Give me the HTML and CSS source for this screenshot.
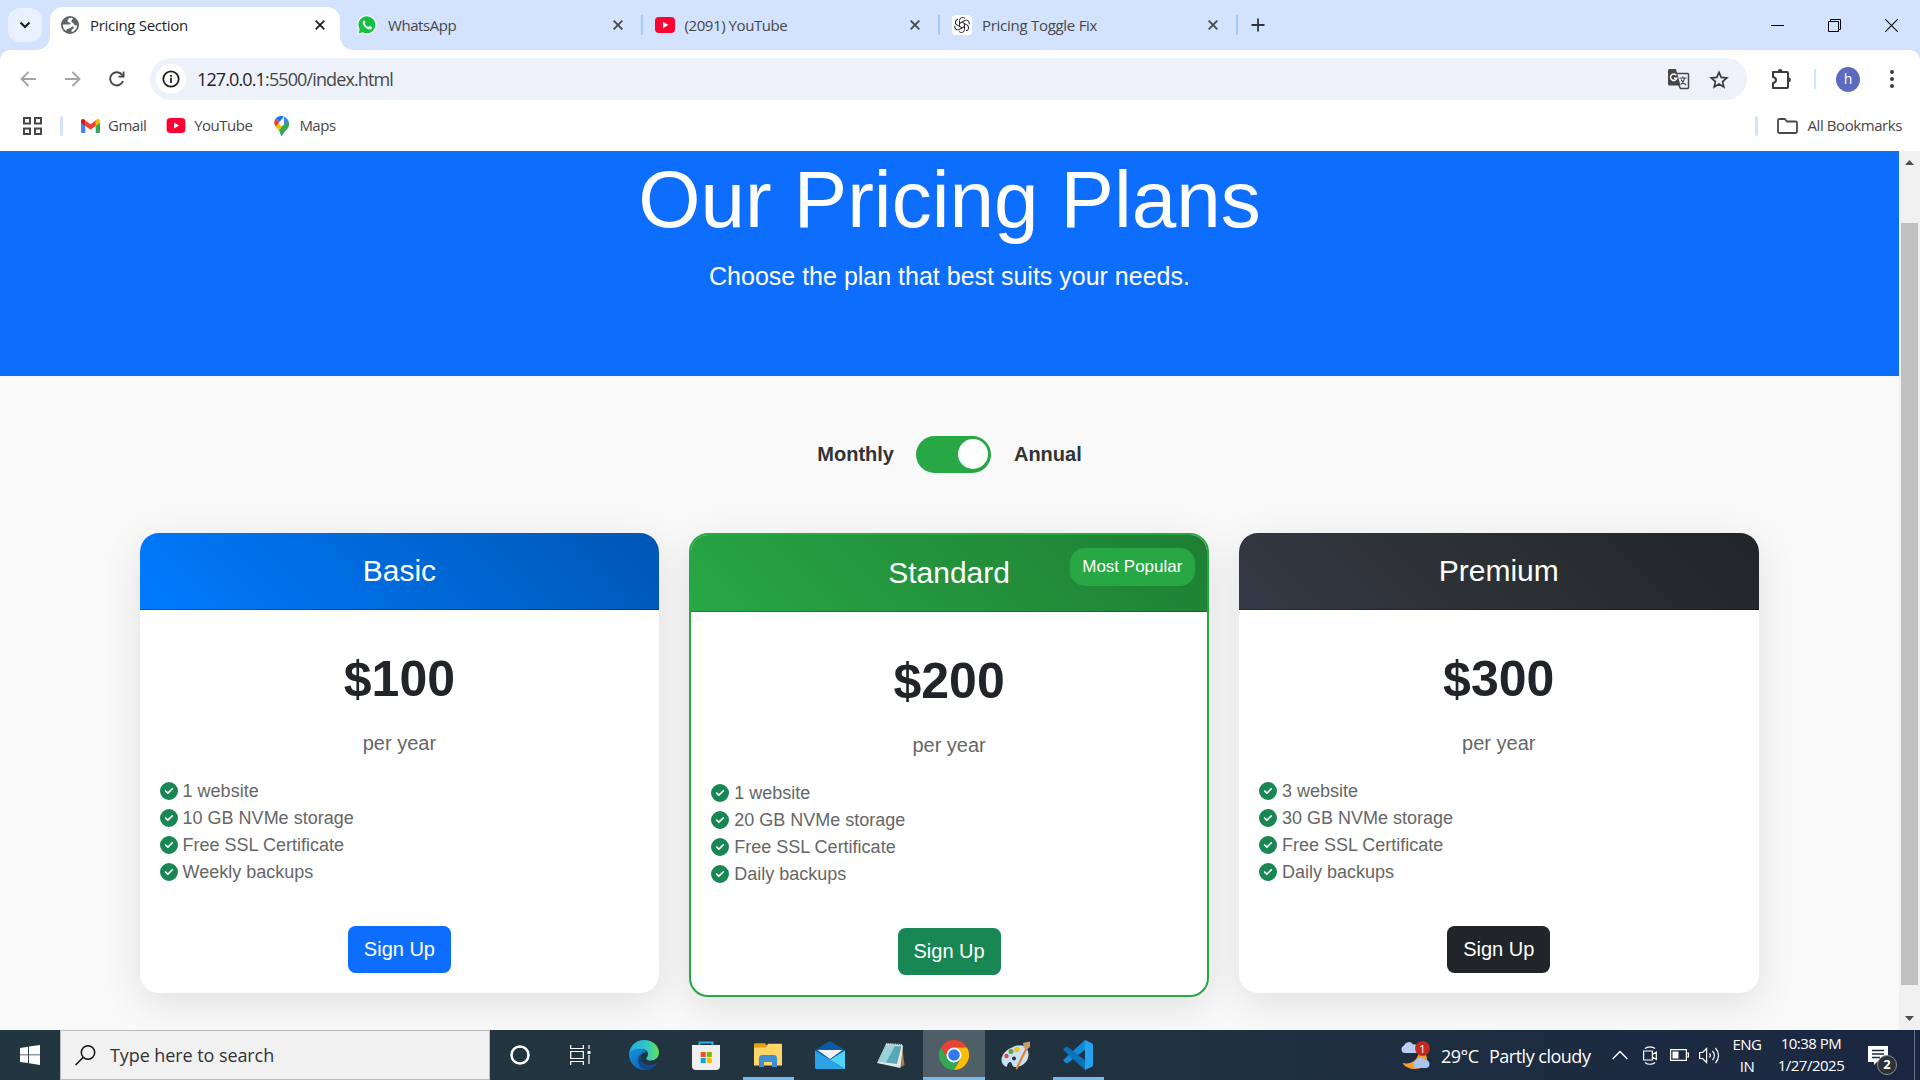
FILE: index.html
```html
<!DOCTYPE html>
<html lang="en">
<head>
<meta charset="utf-8">
<title>Pricing Section</title>
<link rel="stylesheet" href="styles.css">
</head>
<body>
<svg class="defs" aria-hidden="true">
  <symbol id="check" viewBox="0 0 512 512"><path fill="#198754" d="M256 512A256 256 0 1 0 256 0a256 256 0 1 0 0 512zM369 209L241 337c-9.400 9.400-24.600 9.400-33.900 0l-64-64c-9.400-9.400-9.400-24.600 0-33.900s24.600-9.400 33.900 0l47 47L335 175c9.400-9.400 24.600-9.400 33.900 0s9.400 24.600 0 33.900z"/></symbol>
  <symbol id="close" viewBox="0 0 10 10"><path d="M.7.7l8.600 8.600M9.300.7L.7 9.300" fill="none" stroke="currentColor" stroke-width="1.800"/></symbol>
  <symbol id="yt" viewBox="0 0 20 16"><rect width="20" height="16" rx="4" fill="#ff0033"/><path d="M8 4.700v6.600L13.300 8z" fill="#fff"/></symbol>
</svg>

<header class="tabstrip">
  <div class="tab-search"><svg width="12" height="8" viewBox="0 0 12 8"><path d="M1.500 1.500L6 6l4.500-4.500" fill="none" stroke="#1f1f1f" stroke-width="2.200"/></svg></div>
  <div class="tab tab-active">
    <svg class="fav" viewBox="0 0 20 20"><circle cx="10" cy="10" r="9" fill="#5f6368"/><path d="M11.500 2.800C9.500 2.800 7.500 4 7.500 6c0 1.600 1.500 1.300 2.600 1.800 1 .5.300 1.700-.7 1.700H2.900c-.2 3 1.100 5.300 3.300 6.600 0-1.500.6-2.400 1.900-2.400 1.500 0 2.400-.6 3.400-1.600 1-.9 2.300-.5 2.300.6 0 1.300-1.800 1.200-2.200 2.200-.3.800.2 1.600.1 2.200 3-.9 5.300-3.600 5.400-6.900-1.500.5-3-.1-3.300-1.500-.2-1.200-2.200-.7-2.500-2.200-.3-1.300 1.500-1.700 1.500-2.800 0-.4-.4-.8-1.300-.9z" fill="#fff"/></svg>
    <span class="tab-title t-pricing">Pricing Section</span>
    <svg class="tab-x"><use href="#close"/></svg>
  </div>
  <div class="tab">
    <svg class="fav" viewBox="0 0 20 20"><path d="M0 20l1.300-5.200A9.800 9.800 0 1 1 5.200 18.700z" fill="#fff"/><path d="M1.600 18.400l1.100-4A8.500 8.500 0 1 1 5.800 17.300z" fill="#12c143"/><path d="M6.900 5.200c-.8.400-1.400 1.300-1.200 2.500.5 3.200 3.800 6.300 6.900 6.700 1.200.1 2.300-.7 2.400-1.900.1-.4-2.300-1.500-2.600-1.500-.5.100-.7 1.100-1.200 1-1.500-.5-2.900-1.800-3.500-3.300-.1-.5.800-.9.700-1.300-.2-.7-.7-2.300-1.500-2.200z" fill="#fff"/></svg>
    <span class="tab-title t-whatsapp">WhatsApp</span>
    <svg class="tab-x"><use href="#close"/></svg>
  </div>
  <div class="tab tab-ruled">
    <svg class="fav yt-fav"><use href="#yt"/></svg>
    <span class="tab-title t-youtube">(2091) YouTube</span>
    <svg class="tab-x"><use href="#close"/></svg>
  </div>
  <div class="tab tab-ruled">
    <svg class="fav" viewBox="0 0 20 20"><defs><path id="strand" d="M7.500 11.400V5.500A3.100 3.100 0 0 1 13 3.600"/></defs><rect width="20" height="20" rx="4" fill="#fff"/><g fill="none" stroke="#222" stroke-width=".95"><use href="#strand"/><use href="#strand" transform="rotate(60 10 10)"/><use href="#strand" transform="rotate(120 10 10)"/><use href="#strand" transform="rotate(180 10 10)"/><use href="#strand" transform="rotate(240 10 10)"/><use href="#strand" transform="rotate(300 10 10)"/></g></svg>
    <span class="tab-title t-toggle">Pricing Toggle Fix</span>
    <svg class="tab-x"><use href="#close"/></svg>
  </div>
  <div class="new-tab tab-ruled"><svg width="14" height="14" viewBox="0 0 14 14"><path d="M7 .5v13M.5 7h13" stroke="#333" stroke-width="1.800"/></svg></div>
  <div class="win-controls">
    <svg width="13" height="13" viewBox="0 0 13 13"><path d="M0 6.500h13" stroke="#000"/></svg>
    <svg width="13" height="13" viewBox="0 0 13 13"><path d="M.5 2.500h10v10H.5zM2.500 2.500v-2h10v10h-2" fill="none" stroke="#000"/></svg>
    <svg width="13" height="13" viewBox="0 0 13 13"><path d="M.3.300l12.400 12.400M12.700.300L.3 12.700" stroke="#111" stroke-width="1.200"/></svg>
  </div>
</header>

<nav class="browser">
  <div class="toolbar">
    <div class="nav-buttons">
      <svg width="16" height="16" viewBox="0 0 16 16"><path d="M8.500 1L1.500 8l7 7M1.500 8H16" fill="none" stroke="#a3a3a3" stroke-width="1.800"/></svg>
      <svg width="16" height="16" viewBox="0 0 16 16"><path d="M7.500 1l7 7-7 7M14.500 8H0" fill="none" stroke="#a3a3a3" stroke-width="1.800"/></svg>
      <svg width="16" height="16" viewBox="0 0 16 16"><path d="M14 10a6.600 6.600 0 1 1-.9-6.100l1.500 1.600" fill="none" stroke="#474747" stroke-width="1.900"/><path d="M15.500.500v6H9.500V4.700h4.200V.5z" fill="#474747"/></svg>
    </div>
    <div class="omnibox">
      <span class="site-info"><svg width="18" height="18" viewBox="0 0 18 18"><circle cx="9" cy="9" r="7.700" fill="none" stroke="#1f1f1f" stroke-width="1.800"/><path d="M9 7.800v5.200M9 5v1.800" stroke="#1f1f1f" stroke-width="1.800"/></svg></span>
      <span class="url">127.0.0.1<span class="url-path">:5500/index.html</span></span>
      <svg class="translate" width="22" height="21" viewBox="0 0 22 21"><path d="M9 4.500h10.500a1 1 0 0 1 1 1v13a1 1 0 0 1-1 1H12.500l-2-4" fill="#edf1fa" stroke="#474747" stroke-width="1.500"/><path d="M1.500 0H8l4.500 16.500h-11A1.500 1.500 0 0 1 0 15V1.500A1.500 1.500 0 0 1 1.500 0z" fill="#474747"/><path d="M8.300 6.300a3.200 3.200 0 1 0 .5 2.900H5.900" fill="none" stroke="#fff" stroke-width="1.500"/><path d="M11.500 9h7M14.700 7.500V9m2 0c-.5 2.800-2 5-4 6.500m.5-5c1 2.400 2.500 4.300 5 5.500" fill="none" stroke="#474747" stroke-width="1.200"/></svg>
      <svg class="star" width="20" height="19" viewBox="0 0 20 19"><path d="M10 2.300l2.200 5.100 5.600.5-4.200 3.700 1.200 5.400L10 14.100 5.200 17l1.200-5.400-4.200-3.700 5.600-.5z" fill="none" stroke="#3c3c3c" stroke-width="1.700"/></svg>
    </div>
    <svg class="puzzle" width="22" height="21" viewBox="0 0 22 21"><path d="M2 3h14a1 1 0 0 1 1 1v14a1 1 0 0 1-1 1H2v-5c4-.5 4-5.500 0-6z" fill="none" stroke="#3c3c3c" stroke-width="2" stroke-linejoin="round"/><path d="M6.700 2.500a2.400 2.400 0 0 1 4.800 0zM17.500 8.600a2.400 2.400 0 0 1 0 4.800z" fill="#3c3c3c"/></svg>
    <i class="toolbar-rule"></i>
    <span class="avatar">h</span>
    <svg class="dots" width="4" height="18" viewBox="0 0 4 18"><g fill="#3c3c3c"><circle cx="2" cy="2" r="2"/><circle cx="2" cy="9" r="2"/><circle cx="2" cy="16" r="2"/></g></svg>
  </div>
  <div class="bookmarks">
    <svg class="apps" width="19" height="18" viewBox="0 0 19 18"><path d="M1 1h6v5.500H1zM12 1h6v5.500h-6zM1 11.500h6V17H1zM12 11.500h6V17h-6z" fill="none" stroke="#474747" stroke-width="2"/></svg>
    <i class="bm-rule"></i>
    <span class="bm bm-gmail"><svg width="19" height="14" viewBox="0 0 19 14"><path d="M0 2v10.700C0 13.500.6 14 1.300 14h3V5z" fill="#4285f4"/><path d="M19 2v10.700c0 .8-.6 1.300-1.300 1.300h-3V5z" fill="#34a853"/><path d="M14.700 1.300V6.900L19 3.700V2c0-2-2-2.600-3.200-1.600z" fill="#fbbc04"/><path d="M4.300 6.900V1.300l5.200 3.900 5.200-3.900v5.600l-5.200 3.900z" fill="#ea4335"/><path d="M0 2v1.700l4.300 3.200V1.300L3.200.4C2-.6 0 0 0 2z" fill="#c5221f"/></svg><span class="bm-text">Gmail</span></span>
    <span class="bm bm-youtube"><svg width="20" height="15"><use href="#yt"/></svg><span class="bm-text">YouTube</span></span>
    <span class="bm bm-maps"><svg width="15" height="20" viewBox="0 0 15 20"><path d="M7.500 20C6.600 20 6.800 17 4.800 14.500L12 5l2.500 0c1.200 3.500.3 6-1.300 8-2.200 2.800-3.800 4-4.700 6.200-.2.500-.5.800-1 .8z" fill="#34a853"/><path d="M4.800 14.500C3.900 13.200 2.500 12 1.600 10.700l4-4.600 4.300 2.500z" fill="#fbbc04"/><path d="M1.600 10.700C-.3 7.700-.2 4.900 1.700 2.600l4 3.500z" fill="#ea4335"/><path d="M1.700 2.600C3.900 0 6.700-.5 9.700.4L5.700 6.100z" fill="#1a73e8"/><path d="M9.700.4c2.300.8 3.900 2.200 4.800 4.600l-4.600 3.600z" fill="#4285f4"/><circle cx="7.500" cy="7.300" r="2.500" fill="#fff"/></svg><span class="bm-text">Maps</span></span>
    <i class="bm-rule bm-rule-right"></i>
    <span class="bm bm-all"><svg width="21" height="16" viewBox="0 0 21 16"><path d="M2.500 1h5.300l2.200 2.500h8.500A1.500 1.500 0 0 1 20 5v8.500a1.500 1.500 0 0 1-1.500 1.500h-16A1.500 1.500 0 0 1 1 13.500v-11A1.500 1.500 0 0 1 2.500 1z" fill="none" stroke="#474747" stroke-width="1.800"/></svg><span class="bm-text">All Bookmarks</span></span>
  </div>
</nav>

<div class="viewport">
  <main class="page">
    <section class="hero">
      <h1>Our Pricing Plans</h1>
      <p>Choose the plan that best suits your needs.</p>
    </section>
    <div class="billing">
      <span>Monthly</span><span class="switch"><i></i></span><span>Annual</span>
    </div>
    <div class="plans">
      <article class="card basic">
        <h2>Basic</h2>
        <div class="card-body">
          <div class="price">$100</div>
          <p class="period">per year</p>
          <ul>
            <li><svg><use href="#check"/></svg>1 website</li>
            <li><svg><use href="#check"/></svg>10 GB NVMe storage</li>
            <li><svg><use href="#check"/></svg>Free SSL Certificate</li>
            <li><svg><use href="#check"/></svg>Weekly backups</li>
          </ul>
          <a class="btn">Sign Up</a>
        </div>
      </article>
      <article class="card standard">
        <span class="badge">Most Popular</span>
        <h2>Standard</h2>
        <div class="card-body">
          <div class="price">$200</div>
          <p class="period">per year</p>
          <ul>
            <li><svg><use href="#check"/></svg>1 website</li>
            <li><svg><use href="#check"/></svg>20 GB NVMe storage</li>
            <li><svg><use href="#check"/></svg>Free SSL Certificate</li>
            <li><svg><use href="#check"/></svg>Daily backups</li>
          </ul>
          <a class="btn">Sign Up</a>
        </div>
      </article>
      <article class="card premium">
        <h2>Premium</h2>
        <div class="card-body">
          <div class="price">$300</div>
          <p class="period">per year</p>
          <ul>
            <li><svg><use href="#check"/></svg>3 website</li>
            <li><svg><use href="#check"/></svg>30 GB NVMe storage</li>
            <li><svg><use href="#check"/></svg>Free SSL Certificate</li>
            <li><svg><use href="#check"/></svg>Daily backups</li>
          </ul>
          <a class="btn">Sign Up</a>
        </div>
      </article>
    </div>
  </main>
  <aside class="scrollbar">
    <svg width="9" height="5" viewBox="0 0 9 5"><path d="M0 5L4.500 0 9 5z" fill="#505050"/></svg>
    <i class="thumb"></i>
    <svg width="9" height="5" viewBox="0 0 9 5"><path d="M0 0l4.500 5L9 0z" fill="#505050"/></svg>
  </aside>
</div>

<footer class="taskbar">
  <div class="start"><svg width="20" height="20" viewBox="0 0 20 20"><path d="M0 2.900L8.100 1.700v7.700H0zM9 1.600L20 0v9.400H9zM0 10.300h8.100V18L0 16.900zM9 10.300h11V20L9 18.200z" fill="#fff"/></svg></div>
  <div class="search"><svg width="21" height="21" viewBox="0 0 21 21"><circle cx="13" cy="7.500" r="6.700" fill="none" stroke="#111" stroke-width="1.500"/><path d="M8.300 12.300L.6 20" stroke="#111" stroke-width="1.600"/></svg><span>Type here to search</span></div>
  <div class="apps-row">
    <div class="slot"><svg width="20" height="20" viewBox="0 0 20 20"><circle cx="10" cy="10" r="8.500" fill="none" stroke="#fff" stroke-width="2.500"/></svg></div>
    <div class="slot"><svg class="taskview" width="21" height="20" viewBox="0 0 21 20"><path d="M.7 0v3.500h12.600V0M.7 20v-3.500h12.600V20M.7 6.500h12.600v7H.7zM19 0v4M19 10v9" fill="none" stroke="#fff" stroke-width="1.200"/><path d="M17.500 6h3v3h-3z" fill="#fff"/></svg></div>
    <div class="slot"><svg width="30" height="30" viewBox="0 0 30 30"><defs><linearGradient id="edgeTop" x1="0" x2="1"><stop offset="0" stop-color="#27a6e8"/><stop offset=".6" stop-color="#32c8c4"/><stop offset="1" stop-color="#66e04f"/></linearGradient><linearGradient id="edgeLow" x1="0" x2=".8" y1="0" y2="1"><stop offset="0" stop-color="#1795df"/><stop offset="1" stop-color="#0b61b3"/></linearGradient></defs><path d="M0 14C1 5.500 7 0 15 0c9 0 15 6 15 12.500 0 5-4 8-8.500 8-3.500 0-5-1.600-4-2.800 3.500-4 .5-8.700-5-8.700C6 9 1 12 0 14z" fill="url(#edgeTop)"/><path d="M0 14c2-4 6.500-5.500 11-5.200 3.500.3 5.500 2 6.500 3.500-5 0-7 3.700-6 8.200 1 4.800 5 8.500 9 8.500C10.500 33 0 25 0 14z" fill="url(#edgeLow)"/><path d="M12.500 13.500c-3.500 5 1 11.500 8.500 11.500 2.500 0 4.500-.8 6-1.700.7-.4 1.300.2.900.8C25.500 28 21.500 30 17.500 30 9 29 6 18 12.500 13.500z" fill="#114a8b"/></svg></div>
    <div class="slot"><svg class="store" width="30" height="30" viewBox="0 0 30 30"><path d="M8.500 6V2.500h13V6" fill="none" stroke="#2bb4ee" stroke-width="2"/><path d="M1 5h28v21a4 4 0 0 1-4 4H5a4 4 0 0 1-4-4z" fill="#efefef"/><path d="M9.700 12h5v5h-5z" fill="#f25022"/><path d="M15.800 12h5v5h-5z" fill="#7fba00"/><path d="M9.700 18h5v5h-5z" fill="#00a4ef"/><path d="M15.800 18h5v5h-5z" fill="#ffb900"/></svg></div>
    <div class="slot running"><svg width="28" height="24" viewBox="0 0 28 24"><path d="M0 1.500C0 .7.500.2 1.300.2H11l2.500 3H27a1 1 0 0 1 1 1V22H0z" fill="#e4a006"/><path d="M0 4.500h12L14 .8h13a1 1 0 0 1 1 1V22.500H0z" fill="#ffd667"/><path d="M5 24V15a3 3 0 0 1 3-3h12a3 3 0 0 1 3 3v9h-5v-5h-8v5z" fill="#3f8fd2"/></svg></div>
    <div class="slot"><svg width="30" height="28" viewBox="0 0 30 28"><path d="M0 9L15 0l15 9v10H0z" fill="#0c59a4"/><path d="M2.500 9h25L15 18z" fill="#f2f2f2"/><path d="M0 9.500L30 28H1.500A1.500 1.500 0 0 1 0 26.500z" fill="#2ba3e6"/><path d="M30 9.500L15 18.700 30 28z" fill="#4fd4f7"/></svg></div>
    <div class="slot"><svg class="notepad" width="28" height="27" viewBox="0 0 28 27"><path d="M25 3l2.500 20-3.500 2z" fill="#a97f48"/><path d="M9 2l17 1.500-2.500 22.500L0 21z" fill="#e3e8e8"/><path d="M9 3l15.500 1L20 22 1 19.500z" fill="#58a9b5"/><path d="M9 3l9 1L9 20.500l-8-1z" fill="#9bd2d9"/><path d="M9 2.300l16 1" stroke="#dfe5e5" stroke-width="2.600" stroke-dasharray="1.300 .8"/></svg></div>
    <div class="slot running active"><svg width="30" height="30" viewBox="0 0 30 30"><path d="M2 7.500A15 15 0 0 1 28 7.500H15L8.500 18.800z" fill="#ea4335"/><path d="M28 7.500A15 15 0 0 1 15 30l6.500-11.200L21.500 11 15 7.500z" fill="#fbbc04"/><path d="M2 7.500l6.500 11.300 6.500 3.700h4.400L15 30A15 15 0 0 1 2 7.500z" fill="#34a853"/><circle cx="15" cy="15" r="7.500" fill="#fff"/><circle cx="15" cy="15" r="5.800" fill="#2f7bef"/></svg></div>
    <div class="slot"><svg width="30" height="29" viewBox="0 0 30 29"><path d="M12 6c8-4 15-1 15.500 7S20 26.500 14 26c-3 0-2.500-3-4-4.500s-4 1.500-4 4.500C-3 23-1 11 12 6z" fill="#c9e1f2"/><circle cx="5.500" cy="15" r="2.200" fill="#dc4a43"/><circle cx="10" cy="10.500" r="2.500" fill="#55a945"/><circle cx="16" cy="8.500" r="2.700" fill="#f3c21c"/><circle cx="13" cy="17.500" r="2" fill="#233640"/><path d="M25 6l2 1-10.500 21c-1.500 1-2 .2-1.500-1.500z" fill="#e08134"/><path d="M22 2l7-1.500V6l-3 2.500-3-1.500z" fill="#c99d6b"/></svg></div>
    <div class="slot running"><svg width="30" height="30" viewBox="0 0 30 30"><path d="M22 0L1 19.200c-.8.700-.8 1.500 0 2.200L3 23c.6.500 1.200.4 1.800 0L25 7.500z" fill="#0f8bd8"/><path d="M22 30L1 10.800c-.8-.7-.8-1.500 0-2.200L3 7c.6-.5 1.200-.4 1.800 0L25 22.500z" fill="#0873b8"/><path d="M22 0l6.800 3.200c.8.400 1.200 1 1.200 1.800v20c0 .8-.4 1.400-1.200 1.800L22 30z" fill="#25a3f0"/></svg></div>
  </div>
  <div class="tray">
    <div class="weather"><svg width="30" height="29" viewBox="0 0 30 29"><path d="M19 9c4 1 8 5 8 9 0 7-6 10-12 10-5 0-10-2-12.500-6C12 24 19 18 19 9z" fill="#f5a02c"/><path d="M4 12a4 4 0 0 1 0-7.500A5 5 0 0 1 13 3.500a4 4 0 0 1 5 4A3.300 3.300 0 0 1 16 12z" fill="#b9d0f4"/><path d="M16 27a4 4 0 0 1 0-7.500 5 5 0 0 1 8.500-.5 4 4 0 0 1 5 4c0 2.500-1.500 4-3.500 4z" fill="#a8c5f2"/><circle cx="22.500" cy="7.500" r="7.400" fill="#c42b1c"/></svg><span class="alert">1</span></div>
    <span class="temp">29°C</span>
    <span class="cond">Partly cloudy</span>
    <svg class="chev" width="16" height="10" viewBox="0 0 16 10"><path d="M.7 9L8 1.500 15.300 9" fill="none" stroke="#fff" stroke-width="1.400"/></svg>
    <svg class="cam" width="14" height="19" viewBox="0 0 14 19"><path d="M.6 5h8.800v9H.6zM9.500 8.500L13.300 6v7.500L9.500 11M2 2.500c2.500-2.300 7.500-2.300 10 0M2 16.500c2.500 2.300 7.500 2.300 10 0" fill="none" stroke="#fff" stroke-width="1.200"/></svg>
    <svg class="batt" width="19" height="12" viewBox="0 0 19 12"><path d="M.6.600h15.800v10.800H.6zM16.500 4h1.900v4h-1.900" fill="none" stroke="#fff" stroke-width="1.200"/><path d="M2.500 2.500h6v7h-6z" fill="#fff"/></svg>
    <svg class="sound" width="21" height="17" viewBox="0 0 21 17"><path d="M.6 5.500h3l4-4v14l-4-4h-3zM10.500 6.500c1 1.200 1 2.800 0 4M13.500 4c2.300 2.700 2.300 6.300 0 9M16.500 1c4 4.500 4 10.500 0 15" fill="none" stroke="#fff" stroke-width="1.200"/></svg>
    <div class="stack lang"><span>ENG</span><span>IN</span></div>
    <div class="stack clock"><span>10:38 PM</span><span>1/27/2025</span></div>
    <div class="notif"><svg width="20" height="19" viewBox="0 0 20 19"><path d="M0 0h20v16H9l-3 3v-3H0z" fill="#fff"/><path d="M4 4.500h12M4 8h12M4 11.500h8" stroke="#1c2a42" stroke-width="1.300"/></svg><span class="count">2</span></div>
    <i class="peek"></i>
  </div>
</footer>
</body>
</html>
```
FILE: styles.css
```css
* { box-sizing: border-box; }
body {
  margin: 0;
  width: 1920px;
  height: 1080px;
  overflow: hidden;
  display: flex;
  flex-direction: column;
  font-family: "Liberation Sans", Arial, sans-serif;
}
svg { display: block; flex: none; }
.defs { position: absolute; width: 0; height: 0; }

/* Tab strip */
.tabstrip, .browser, .taskbar { font-family: "Open Sans", "Noto Sans", sans-serif; }
.tabstrip { height: 50px; flex: none; display: flex; background: #d3e3fd; }
.tab-search {
  width: 34px; height: 34px; margin: 8px 8px 0;
  border-radius: 12px; background: #e9f1fe;
  display: flex; align-items: center; justify-content: center;
}
.tab { width: 297.500px; height: 50px; padding: 0 18px 0 14px; display: flex; align-items: center; color: #474747; position: relative; }
.tab-active {
  width: 290px; height: 43px; margin: 7px 3px 0 0; padding: 0 15px 7px 10px;
  background: #fff; border-radius: 13px 13px 0 0; color: #1f1f1f;
}
.tab-active::before, .tab-active::after {
  content: ""; position: absolute; bottom: 0; width: 13px; height: 13px;
}
.tab-active::before { left: -13px; background: radial-gradient(circle at 0 0, transparent 12.5px, #fff 13px); }
.tab-active::after { right: -13px; background: radial-gradient(circle at 100% 0, transparent 12.5px, #fff 13px); }
.tab-ruled { background: linear-gradient(#a8c7fa, #a8c7fa) no-repeat 0 15px / 2px 20px; }
.fav { width: 20px; height: 20px; margin-right: 10px; }
.yt-fav { height: 16px; }
.tab-title { flex: 1; font-size: 15px; white-space: nowrap; }
.t-pricing { letter-spacing: -.3px; }
.t-whatsapp { letter-spacing: -.45px; margin-left: 1px; }
.t-youtube { letter-spacing: -.42px; }
.t-toggle { letter-spacing: -.28px; }
.tab-x { width: 10px; height: 10px; }
.new-tab { width: 50px; padding-left: 15px; display: flex; align-items: center; }
.win-controls { margin-left: auto; padding-right: 22px; display: flex; align-items: center; gap: 44px; }

/* Toolbar and bookmarks */
.browser {
  height: 101px; flex: none;
  background:
    radial-gradient(circle at 10px 10px, #fff 9.5px, #d3e3fd 10px) 0 0 / 10px 10px no-repeat,
    radial-gradient(circle at 0 10px, #fff 9.5px, #d3e3fd 10px) 100% 0 / 10px 10px no-repeat,
    #fff;
}
.toolbar { display: flex; align-items: center; height: 58px; padding: 0 26px 0 20px; }
.nav-buttons { display: flex; gap: 28.500px; width: 130px; }
.omnibox { width: 1597px; height: 42px; border-radius: 21px; background: #edf1fa; display: flex; align-items: center; padding: 0 18px 0 6px; flex: none; }
.site-info { width: 30px; height: 30px; border-radius: 50%; background: #fff; display: flex; align-items: center; justify-content: center; margin-right: 11px; }
.url { font-size: 18px; letter-spacing: -.88px; color: #1f1f1f; flex: 1; }
.url-path { color: #474747; }
.translate { margin-right: 19px; }
.nav-buttons { flex: none; }
.puzzle { margin: 0 21px 0 24px; }
.toolbar-rule { width: 2px; height: 20px; background: #d3e3fd; }
.avatar { width: 25px; height: 25px; border-radius: 50%; background: #5c6bc0; color: #fff; font-size: 14px; line-height: 24px; text-align: center; margin: 0 30px 0 20px; }
.bookmarks { display: flex; align-items: center; height: 35px; padding: 0 18px 0 23px; color: #474747; }
.bm-rule { width: 3px; height: 20px; border-radius: 2px; background: #d3e3fd; margin: 0 18px; }
.bm { display: flex; align-items: center; }
.bm svg { margin-right: 8px; }
.bm-text { font-size: 15px; line-height: 20px; padding-bottom: 1px; letter-spacing: -.5px; white-space: nowrap; }
.bm-youtube { margin-left: 20px; }
.bm-maps { margin-left: 22px; }
.bm-maps svg { margin-right: 10px; }
.bm-rule-right { margin: 0 19px 0 auto; }
.bm-all svg { margin-right: 10px; }
.bm-all .bm-text { letter-spacing: -.42px; }

/* Page */
.viewport { height: 879px; flex: none; display: flex; }
.page { width: 1899px; background: #f9f9f9; overflow: hidden; }
.hero { height: 225px; padding-top: 1px; background: #0d6efd; color: #fff; text-align: center; }
.hero h1 { margin: 0; font-size: 80px; font-weight: 400; line-height: 96px; }
.hero p { margin: 9px 0 0; font-size: 25px; line-height: 38px; }
.billing { display: flex; justify-content: center; align-items: center; gap: 22.500px; height: 37px; margin: 60px 0; font-size: 20px; font-weight: 700; color: #333; }
.switch { width: 75px; height: 37px; border-radius: 19px; background: #28a745; padding: 3px; display: flex; justify-content: flex-end; }
.switch i { width: 30px; height: 30px; border-radius: 50%; background: #fff; }
.plans { display: grid; grid-template-columns: repeat(3, 519.670px); column-gap: 30px; padding-left: 139.600px; align-items: start; }
.card { position: relative; border-radius: 19px; background: #fff; box-shadow: 0 10px 38px rgba(0, 0, 0, .1); overflow: hidden; text-align: center; }
.card h2 { margin: 0; height: 77px; padding-top: 20px; border-bottom: 1px solid rgba(0, 0, 0, .22); font-size: 30px; font-weight: 400; line-height: 36px; color: #fff; }
.basic h2 { background: linear-gradient(45deg, #007bff, #0056b3); }
.standard { border: 2px solid #28a745; }
.standard h2 { background: linear-gradient(45deg, #28a745, #1e7e34); }
.premium h2 { background: linear-gradient(45deg, #343a46, #2b3033 50%, #212529); }
.badge { position: absolute; top: 13px; right: 12px; height: 38px; padding: 0 12.500px; border-radius: 15px; background: #28a745; color: #fff; font-size: 17px; line-height: 37px; }
.card-body { height: 383px; padding: 39px 20px 20px; display: flex; flex-direction: column; align-items: center; }
.price { font-size: 50px; font-weight: 700; line-height: 60px; color: #212529; }
.period { margin: 19px 0 20px; font-size: 20px; line-height: 30px; color: #666; }
.card ul { align-self: stretch; margin: 0; padding: 0; list-style: none; font-size: 18px; line-height: 27px; color: #666; }
.card li { display: flex; align-items: center; }
.card li svg { width: 18px; height: 18px; margin: 0 5px 2px 0; }
.btn { margin-top: auto; height: 47px; padding: 0 16px; border-radius: 7.500px; font-size: 20px; line-height: 46px; color: #fff; background: #0d6efd; }
.standard .btn { background: #198754; }
.premium .btn { background: #212529; }
.scrollbar { width: 21px; background: #f1f1f1; display: flex; flex-direction: column; align-items: center; padding: 9px 0; }
.thumb { width: 17px; height: 762px; margin: 58px 0 auto; background: #c1c1c1; }

/* Taskbar */
.taskbar { height: 50px; flex: none; display: flex; background: linear-gradient(90deg, #21363f, #21343f 50%, #1e2e40 72%, #1b2742); color: #fff; }
.start { width: 60px; display: flex; align-items: center; justify-content: center; }
.search { width: 430px; border: 1px solid #bcbcbc; background: #f1f1f1; color: #333; display: flex; align-items: center; padding-left: 14px; font-size: 18px; letter-spacing: -.08px; }
.search span { margin-left: 14px; }
.apps-row { display: flex; margin-left: -1px; }
.slot { width: 62px; display: flex; align-items: center; justify-content: center; }
.taskview { margin-right: 3px; }
.store { margin-right: 1px; }
.notepad { margin-right: 2px; }
.running { background: linear-gradient(#76b9ed, #76b9ed) no-repeat 50% 100% / 51px 3px; }
.active { background: linear-gradient(#76b9ed, #76b9ed) no-repeat 50% 100% / 62px 3px, #4f5e67; }
.tray { margin-left: auto; width: 520px; display: flex; align-items: center; }
.weather { position: relative; margin-right: 11px; }
.alert { position: absolute; left: 15px; top: 0; width: 15px; text-align: center; font-size: 11px; line-height: 15px; }
.temp { width: 48px; font-size: 18px; letter-spacing: -.5px; white-space: nowrap; }
.cond { width: 123px; font-size: 18px; letter-spacing: -.5px; white-space: nowrap; }
.temp, .cond { padding-top: 1px; }
.cam { margin-left: 15px; }
.batt { margin-left: 13px; }
.sound { margin-left: 10px; }
.stack { display: flex; flex-direction: column; align-items: center; font-size: 15px; line-height: 22px; letter-spacing: -.5px; white-space: nowrap; }
.lang { width: 30px; margin-left: 12px; }
.clock { width: 70px; margin-left: 14px; padding-bottom: 2px; }
.notif { position: relative; margin-left: 22px; }
.count { position: absolute; left: 9px; top: 9px; width: 20px; height: 20px; border: 1px solid #8b8f96; border-radius: 50%; background: #2f3136; font-size: 13px; font-weight: 700; line-height: 17px; text-align: center; }
.peek { width: 1px; height: 50px; margin-left: auto; margin-right: 5px; background: #68717f; }
```
